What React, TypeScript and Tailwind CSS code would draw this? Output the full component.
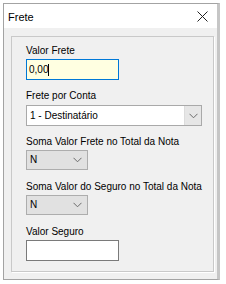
import React from "react";

const font = { fontFamily: '"Liberation Sans", Arial, sans-serif' };

function Chevron() {
  return (
    <svg width="9" height="6" viewBox="0 0 9 6" className="block">
      <path d="M0.5 0.8 L4.5 4.8 L8.5 0.8" fill="none" stroke="#6b6b6b" strokeWidth="1" />
    </svg>
  );
}

function Label({ children, className = "" }: { children: React.ReactNode; className?: string }) {
  return <div className={`h-[12px] leading-[12px] text-[10px] text-black whitespace-nowrap ${className}`}>{children}</div>;
}

export default function App() {
  return (
    <div className="w-[226px] h-[284px] bg-white pt-[3px] pl-[3px]" style={font}>
      <div className="w-[217px] h-[277px] flex flex-col border-l border-t border-b border-[#a3a3a3] border-r-[3px] border-r-[#c6c6c6]">
        <div className="h-[24px] bg-white flex items-center justify-between pl-[4px] pr-[9px]">
          <span className="text-[11px] leading-[12px] text-black mt-[1px]">Frete</span>
          <svg width="11" height="11" viewBox="0 0 11 11" className="block">
            <path d="M0.5 0.5 L10.5 10.5 M10.5 0.5 L0.5 10.5" stroke="#222" strokeWidth="1" />
          </svg>
        </div>
        <div className="flex-1 bg-[#f0f0f0] pt-[8px] pl-[7px] pr-[3px]">
          <div className="w-[203px] h-[236px] border border-[#c9c9c9] shadow-[1px_1px_0_#ffffff] px-[14px] pt-[8px] flex flex-col">
            <Label>Valor Frete</Label>
            <div className="mt-[2px] w-[93px] h-[21px] border border-[#0078d7] bg-[#ffffe1] flex items-center pl-[2px]">
              <span className="text-[10px] leading-[12px] text-black">0,00</span>
              <span className="w-px h-[12px] bg-black" />
            </div>

            <Label className="mt-[10px]">Frete por Conta</Label>
            <div className="mt-[3px] w-[176px] h-[21px] border border-[#a9a9a9] bg-white flex items-stretch">
              <div className="flex-1 flex items-center pl-[3px] text-[10px] leading-[12px] text-black">1 - Destinatário</div>
              <div className="w-[17px] bg-[#e6e6e6] border-l border-[#dcdcdc] flex items-center justify-center">
                <Chevron />
              </div>
            </div>

            <Label className="mt-[10px]">Soma Valor Frete no Total da Nota</Label>
            <div className="mt-[2px] w-[62px] h-[20px] border border-[#adadad] bg-[#e1e1e1] flex items-center justify-between pl-[3px] pr-[5px]">
              <span className="text-[10px] leading-[12px] text-black">N</span>
              <Chevron />
            </div>

            <Label className="mt-[11px]">Soma Valor do Seguro no Total da Nota</Label>
            <div className="mt-[2px] w-[62px] h-[20px] border border-[#adadad] bg-[#e1e1e1] flex items-center justify-between pl-[3px] pr-[5px]">
              <span className="text-[10px] leading-[12px] text-black">N</span>
              <Chevron />
            </div>

            <Label className="mt-[11px]">Valor Seguro</Label>
            <div className="mt-[2px] w-[93px] h-[21px] border border-[#7a7a7a] bg-white" />
          </div>
        </div>
      </div>
    </div>
  );
}
